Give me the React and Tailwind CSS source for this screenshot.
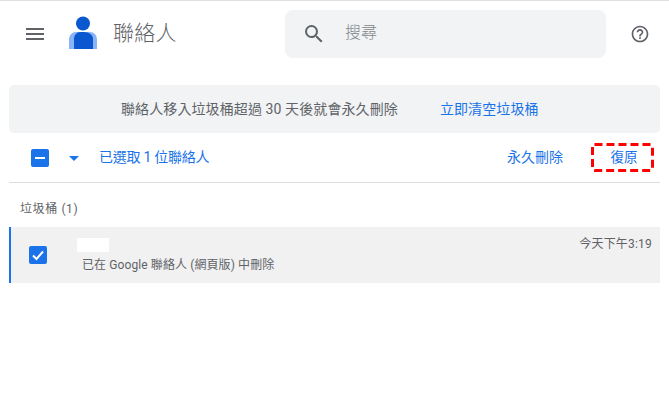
export default function App() {
  return (
    <div className="w-[669px] h-[411px] bg-white overflow-hidden border-t border-[#e0e0e0] font-['Roboto','Noto_Sans_CJK_TC',sans-serif]">
      <header className="h-[65px] flex items-center">
        <button className="w-[24px] h-[24px] ml-[23px] flex items-center justify-center">
          <svg width="24" height="24" viewBox="0 0 24 24" fill="#5f6368"><path d="M3 18h18v-2H3v2zm0-5h18v-2H3v2zm0-7v2h18V6H3z" /></svg>
        </button>
        <svg className="ml-[22px] mb-[2px]" width="28" height="34" viewBox="0 0 28 34">
          <path d="M0 33V24c0-5 3-8 7-8h14c4 0 7 3 7 8v9z" fill="#8ab4f8" />
          <path d="M5 33V23c0-4 3-7 6-7h4c5 0 9 3 9 7v10z" fill="#0b57d0" />
          <circle cx="14" cy="7.500" r="7" fill="#0b57d0" />
        </svg>
        <span className="ml-[16px] mb-[2px] text-[21px] leading-[28px] tracking-[0.3px] font-light text-[#5f6368]">聯絡人</span>
        <div className="ml-[108px] w-[321px] h-[48px] rounded-[8px] bg-[#f1f3f4] flex items-center pl-[17px]">
          <svg width="24" height="24" viewBox="0 0 24 24" fill="#5f6368"><path d="M15.500 14h-.79l-.28-.27A6.471 6.471 0 0 0 16 9.500 6.500 6.500 0 1 0 9.500 16c1.610 0 3.090-.59 4.230-1.570l.27.28v.79l5 4.990L20.490 19l-4.990-5zm-6 0C7.010 14 5 11.990 5 9.500S7.010 5 9.500 5 14 7.010 14 9.500 11.990 14 9.500 14z" /></svg>
          <span className="ml-[19px] mb-[2px] text-[16px] font-light text-[#80868b]">搜尋</span>
        </div>
        <svg className="ml-[24px]" width="20" height="20" viewBox="0 0 24 24" fill="#5f6368"><path d="M11 18h2v-2h-2v2zm1-16C6.480 2 2 6.480 2 12s4.480 10 10 10 10-4.480 10-10S17.520 2 12 2zm0 18c-4.410 0-8-3.590-8-8s3.590-8 8-8 8 3.590 8 8-3.590 8-8 8zm0-14c-2.210 0-4 1.790-4 4h2c0-1.100.9-2 2-2s2 .9 2 2c0 2-3 1.750-3 5h2c0-2.250 3-2.500 3-5 0-2.210-1.790-4-4-4z" /></svg>
      </header>
      <div className="mx-[9px] mt-[19px] w-[651px] h-[48px] rounded-[5px] bg-[#f1f3f4] flex items-center pl-[112px] text-[14px] tracking-[0.1px]">
        <span className="text-[#5f6368]">聯絡人移入垃圾桶超過 30 天後就會永久刪除</span>
        <span className="ml-[42px] text-[#1a73e8]">立即清空垃圾桶</span>
      </div>
      <div className="mx-[9px] w-[651px] h-[50px] border-b border-[#dadce0] flex items-center text-[14px] text-[#1a73e8]">
        <span className="ml-[22px] w-[18px] h-[18px] rounded-[2px] bg-[#1a73e8] flex items-center justify-center">
          <span className="w-[10px] h-[2px] bg-white" />
        </span>
        <svg className="ml-[20px] mt-[2px]" width="10" height="5" viewBox="0 0 10 5" fill="#1a73e8"><path d="M0 0h10L5 5z" /></svg>
        <span className="ml-[20px] tracking-[-0.25px]">已選取 1 位聯絡人</span>
        <span className="ml-auto">永久刪除</span>
        <span className="relative ml-[28px] mr-[6px] w-[63px] h-[29px] flex items-center justify-center pl-[3px] text-[13.5px]">
          復原
          <svg className="absolute inset-0" width="63" height="29" viewBox="0 0 63 29" fill="none" stroke="#ff0000" strokeWidth="3">
            <rect x="1.500" y="1.500" width="60" height="26" rx="2" strokeDasharray="8 4" />
          </svg>
        </span>
      </div>
      <div className="ml-[20px] mt-[17px] h-[18px] leading-[18px] text-[12px] tracking-[0.6px] text-[#5f6368]">垃圾桶 (1)</div>
      <div className="mx-[9px] mt-[9px] w-[651px] h-[56px] bg-[#f1f1f1] border-l-2 border-[#1a73e8] flex items-center">
        <span className="ml-[18px] w-[18px] h-[18px] rounded-[2px] bg-[#1a73e8] flex items-center justify-center">
          <svg width="14" height="14" viewBox="0 0 14 14" fill="none" stroke="#fff" strokeWidth="2"><path d="M2 7.500l3.500 3.500L12 3.500" /></svg>
        </span>
        <div className="ml-[35px] pt-[2px] flex flex-col">
          <span className="-ml-[5px] w-[32px] h-[14px] bg-white" />
          <span className="mt-[4px] text-[12px] leading-[18px] tracking-[0.1px] text-[#5f6368]">已在 Google 聯絡人 (網頁版) 中刪除</span>
        </div>
        <span className="ml-auto mr-[8px] mb-[22px] text-[12px] leading-[18px] tracking-[0.2px] text-[#5f6368]">今天下午3:19</span>
      </div>
    </div>
  );
}
